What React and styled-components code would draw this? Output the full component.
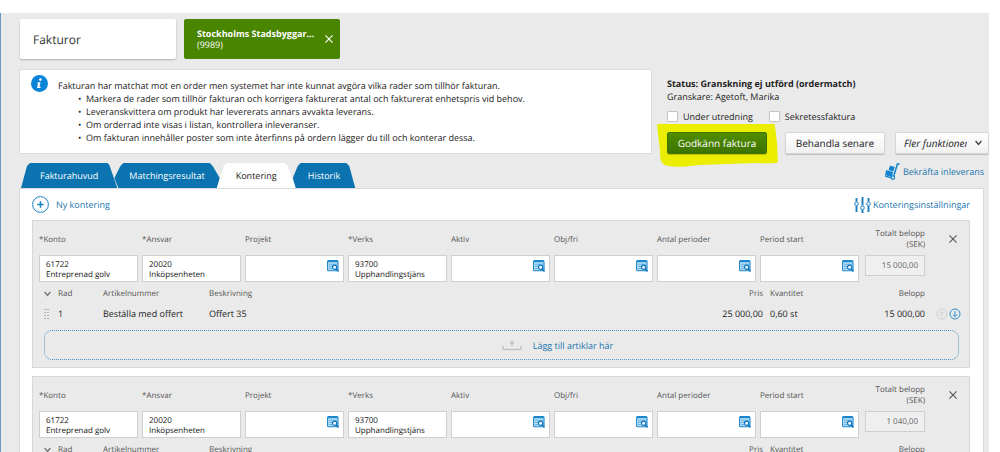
import React, { useState } from "react";
import styled, { createGlobalStyle, css } from "styled-components";

const blue = "#0b74b0";
const link = "#1c77ae";

const GlobalStyle = createGlobalStyle`
  *, *::before, *::after { box-sizing: border-box; }
  html { scrollbar-width: none; }
  body { margin: 0; background: #fff; overflow-x: hidden; }
  body, button, input, select, textarea {
    font-family: "Open Sans", "Noto Sans", sans-serif;
    text-rendering: geometricPrecision;
  }
  body { font-size: 9px; line-height: 13px; color: #222; }
  button { cursor: pointer; }
`;

const Page = styled.div`
  padding: 13px 11px 0 0;
`;

const Shell = styled.main`
  min-height: calc(100vh - 13px);
  padding: 6px 5px 0 18px;
  background: #eaeaea;
  border-left: 1px solid #6f97c2;
`;

const WorkTabs = styled.nav`
  display: flex;
  gap: 8px;
  padding-left: 1px;
`;

const WorkTab = styled.button`
  display: flex;
  align-items: center;
  justify-content: space-between;
  width: 156px;
  height: 40px;
  padding: 0 7px 0 13px;
  border: 0;
  border-radius: 2px;
  text-align: left;
  font-size: 12px;
  color: #333;
  background: #fff;
  box-shadow: 0 1px 2px rgba(0, 0, 0, 0.25);
  ${(p) =>
    p.$active &&
    css`
      font-size: 9px;
      line-height: 11px;
      color: #fff;
      background: #4a8500;
      box-shadow: none;
    `}
  svg { flex: none; }
`;

const WorkTabText = styled.span`
  display: block;
  white-space: nowrap;
  strong { display: block; }
`;

const Header = styled.header`
  display: flex;
  gap: 15px;
  margin: 10px -5px 0 0;
`;

const InfoBox = styled.section`
  display: flex;
  flex: 1;
  gap: 10px;
  padding: 5px 11px 0;
  background: #fff;
  border: 1px solid #dcdcdc;
  border-radius: 2px;
`;

const InfoText = styled.div`
  padding-top: 4px;
  p { margin: 0; }
  ul { margin: 0; padding: 0; list-style: none; }
  li { display: flex; padding-left: 20px; line-height: 13px; }
  li::before { content: "•"; width: 8px; }
`;

const StatusPanel = styled.section`
  width: 322px;
  padding-top: 8px;
`;

const StatusLine = styled.p`
  margin: 0;
  font-weight: ${(p) => (p.$strong ? 700 : 400)};
`;

const CheckRow = styled.div`
  display: flex;
  gap: 16px;
  margin: 7px 0 9px;
`;

const CheckLabel = styled.label`
  display: flex;
  align-items: center;
  gap: 5px;
`;

const Check = styled.input`
  appearance: none;
  width: 11px;
  height: 11px;
  margin: 0;
  background: #fff;
  border: 1px solid #c4c4c4;
  border-radius: 1px;
  &:checked { background: ${blue}; }
`;

const Actions = styled.div`
  display: flex;
  gap: 10px;
`;

const Highlighted = styled.div`
  position: relative;
  padding-right: 8px;
`;

const Marker = styled.svg`
  position: absolute;
  left: -10px;
  top: -9px;
  width: 122px;
  height: 45px;
`;

const buttonBase = css`
  height: 22px;
  border: 1px solid #d6d6d6;
  border-radius: 2px;
  font-size: 10px;
  line-height: 14px;
  color: #222;
  background: linear-gradient(#fff, #f1f1f1);
  box-shadow: 0 1px 1px rgba(0, 0, 0, 0.2);
`;

const Button = styled.button`
  ${buttonBase}
  position: relative;
  width: 100px;
  padding: 0;
  white-space: nowrap;
  ${(p) =>
    p.$primary &&
    css`
      color: #fff;
      border-color: #3f7400;
      background: linear-gradient(#4f8d00, #3d7300);
    `}
`;

const SelectWrap = styled.div`
  position: relative;
  flex: 1;
  min-width: 0;
  svg { position: absolute; right: 7px; top: 8px; pointer-events: none; }
`;

const Select = styled.select`
  ${buttonBase}
  appearance: none;
  width: 100%;
  padding: 0 21px 0 8px;
  font-style: italic;
`;

const TabBar = styled.div`
  display: flex;
  justify-content: space-between;
  align-items: flex-start;
  margin-top: 9px;
  padding-left: 2px;
`;

const Tabs = styled.div`
  display: flex;
`;

const shapes = {
  first: "polygon(0 100%, 6px 3px, 9px 0, calc(100% - 10px) 0, calc(100% - 8px) 2px, 100% 100%)",
  middle:
    "polygon(4px 100%, 0 60%, 6px 3px, 9px 0, calc(100% - 10px) 0, calc(100% - 7px) 3px, 100% 60%, calc(100% - 2px) 100%)",
  open: "polygon(0 100%, 7px 3px, 10px 0, calc(100% - 11px) 0, calc(100% - 8px) 3px, 100% 100%)",
  last: "polygon(3px 100%, 0 60%, 5px 3px, 8px 0, calc(100% - 9px) 0, calc(100% - 6px) 3px, 100% 100%)",
};

const Tab = styled.button`
  height: 25px;
  padding: 0 ${(p) => (p.$shape === "middle" || p.$shape === "last" ? 15 : 19)}px;
  border: 0;
  font-size: 9px;
  color: ${(p) => (p.$shape === "open" ? "#222" : "#fff")};
  background: ${(p) => (p.$shape === "open" ? "#fff" : blue)};
  clip-path: ${(p) => shapes[p.$shape]};
  & + & { margin-left: -3px; }
`;

const IconLink = styled.a`
  display: flex;
  align-items: center;
  gap: ${(p) => p.$gap || 2}px;
  color: ${link};
  text-decoration: none;
`;

const Panel = styled.section`
  padding: 0 13px 8px 12px;
  background: #fff;
  border: 1px solid #d9d9d9;
`;

const Toolbar = styled.div`
  display: flex;
  align-items: center;
  justify-content: space-between;
  height: 31px;
`;

const LinkButton = styled.button`
  display: flex;
  align-items: center;
  gap: 7px;
  padding: 0;
  border: 0;
  background: none;
  font-size: 9px;
  color: ${link};
`;

const Card = styled.article`
  padding: 0 0 7px 6px;
  background: #eaeaea;
  border: 1px solid #d8d8d8;
  & + & { margin-top: 8px; }
`;

const FieldGrid = styled.div`
  display: grid;
  grid-template-columns: repeat(8, minmax(0, 1fr)) 62px 40px;
  column-gap: 4px;
`;

const Field = styled.label`
  display: block;
  font-size: 8px;
  line-height: 11px;
  color: #555;
`;

const FieldName = styled.span`
  display: flex;
  align-items: center;
  height: 34px;
  padding-top: 2px;
  ${(p) => p.$end && css`
    justify-content: flex-end;
    text-align: right;
  `}
`;

const FieldBox = styled.span`
  position: relative;
  display: block;
  svg { position: absolute; right: 5px; top: 5px; }
`;

const FieldText = styled.textarea`
  display: block;
  width: 100%;
  height: 27px;
  padding: 4px 20px 0 6px;
  overflow: hidden;
  resize: none;
  border: 1px solid #cfcfcf;
  border-radius: 0;
  background: #fff;
  font-size: 8px;
  line-height: 10px;
  color: #111;
`;

const TotalField = styled(Field)`
  padding-left: 2px;
`;

const TotalInput = styled.input`
  display: block;
  width: 100%;
  height: 21px;
  padding: 0 6px;
  border: 1px solid #cfcfcf;
  background: #efefef;
  font-size: 8px;
  text-align: right;
  color: #666;
`;

const CloseButton = styled.button`
  justify-self: end;
  align-self: start;
  margin: 14px 12px 0 0;
  padding: 0;
  border: 0;
  background: none;
  svg { display: block; }
`;

const Lines = styled.table`
  width: 100%;
  margin-top: 2px;
  table-layout: fixed;
  border-collapse: collapse;
  tr { height: 20px; }
`;

const Cell = styled.td`
  padding: 0 0 0 ${(p) => p.$pad || 0}px;
  text-align: ${(p) => (p.$end ? "right" : "left")};
  color: #222;
  font-size: 9px;
  font-weight: 400;
  line-height: 12px;
  white-space: nowrap;
  svg { display: inline-block; vertical-align: middle; }
`;

const HeadCell = styled(Cell)`
  font-size: 8px;
  color: #555;
`;

const MiniButton = styled.button`
  padding: 0;
  margin-left: 1px;
  border: 0;
  background: none;
  svg { display: block; }
`;

const MiniGroup = styled.div`
  display: flex;
`;

const DropZone = styled.button`
  display: flex;
  align-items: center;
  justify-content: center;
  gap: 11px;
  width: calc(100% - 15px);
  height: 30px;
  margin: 6px 10px 0 5px;
  padding: 0 0 0 112px;
  border: 1px dotted #4a94c8;
  border-radius: 8px;
  background: none;
  font-size: 9px;
  color: ${link};
`;

const InfoIcon = () => (
  <svg width="17" height="17" viewBox="0 0 17 17" aria-hidden="true">
    <circle cx="8.5" cy="8.5" r="8.5" fill="#0a84d8" />
    <circle cx="9.4" cy="4.6" r="1.3" fill="#fff" />
    <path d="M6.6 7.2h2.9l-1 4.6h1.2l-.3 1.2H6l1-4.6H6.3z" fill="#fff" />
  </svg>
);

const Cross = ({ color = "#555", size = 8 }) => (
  <svg width={size} height={size} viewBox="0 0 8 8" fill="none" stroke={color} strokeWidth="1.1" aria-hidden="true">
    <path d="M.4.4l7.2 7.2M7.6.4L.4 7.6" />
  </svg>
);

const Chevron = ({ color = "#444" }) => (
  <svg width="7" height="6" viewBox="0 0 7 6" fill="none" stroke={color} strokeWidth="1.4" aria-hidden="true">
    <path d="M.6 1l2.9 3.4L6.4 1" />
  </svg>
);

const PlusIcon = () => (
  <svg width="17" height="17" viewBox="0 0 17 17" fill="none" stroke="#1b80c4" aria-hidden="true">
    <circle cx="8.5" cy="8.5" r="7.9" strokeWidth="1" />
    <path d="M8.5 5.3v6.4M5.3 8.5h6.4" strokeWidth="1.5" />
  </svg>
);

const SlidersIcon = () => (
  <svg width="17" height="16" viewBox="0 0 17 16" fill="none" stroke="#1b7dbd" aria-hidden="true">
    <path d="M2.5 1v3.5M2.5 9v6M8.5 0v8.5M8.5 13v3M14.5 1v3.5M14.5 9v6" strokeWidth="1.9" />
    <circle cx="2.5" cy="6.7" r="1.8" />
    <circle cx="8.5" cy="10.8" r="1.8" />
    <circle cx="14.5" cy="6.7" r="1.8" />
  </svg>
);

const CartIcon = () => (
  <svg width="15" height="17" viewBox="0 0 15 17" aria-hidden="true">
    <path d="M14.6 1h-2.2L8.8 13" fill="none" stroke="#1585d0" strokeWidth="1.5" />
    <path d="M5 2.6l4.8 1.3-1.5 4.6L3.600 7z" fill="#1585d0" />
    <path d="M1.200 7l7 1.900-1.500 5L0 12z" fill="#1585d0" />
    <path d="M0 12.900l6.600 2" stroke="#1585d0" strokeWidth="1.400" />
    <circle cx="7.900" cy="14.600" r="1.700" fill="#eaeaea" stroke="#1585d0" strokeWidth="1.200" />
  </svg>
);

const LookupIcon = () => (
  <svg width="12" height="12" viewBox="0 0 12 12" fill="none" aria-hidden="true">
    <rect x=".6" y=".6" width="10.4" height="10.2" rx="1" fill="#bfe3f8" stroke="#1b86cc" strokeWidth="1.1" />
    <path d="M1 1.500h9.600" stroke="#1b86cc" strokeWidth="1.400" />
    <path d="M2 4.200h8M2 6.400h3.500M2 8.600h3" stroke="#4aa5de" strokeWidth=".9" />
    <circle cx="7.600" cy="7.300" r="2.100" fill="#fff" stroke="#0f76bd" strokeWidth="1.200" />
    <path d="M9.200 8.900l2.300 2.500" stroke="#0f76bd" strokeWidth="1.500" />
  </svg>
);

const ArrowCircle = ({ up, color }) => (
  <svg width="12" height="12" viewBox="0 0 12 12" fill="none" stroke={color} aria-hidden="true">
    <circle cx="6" cy="6" r="5" />
    <path d={up ? "M6 8.800V3.400M3.900 5.500L6 3.400l2.100 2.100" : "M6 3.200v5.400M3.900 6.500L6 8.600l2.100-2.100"} />
  </svg>
);

const GripIcon = () => (
  <svg width="6" height="11" viewBox="0 0 6 11" fill="#b0b0b0" aria-hidden="true">
    {[0, 3, 6, 9].map((y) => (
      <React.Fragment key={y}>
        <rect x="0" y={y} width="2" height="1" />
        <rect x="3" y={y} width="2" height="1" />
      </React.Fragment>
    ))}
  </svg>
);

const TrayIcon = () => (
  <svg width="20" height="12" viewBox="0 0 20 12" fill="none" stroke="#c2c2c2" aria-hidden="true">
    <path d="M1 7v3.500h18V7" strokeWidth="1.300" />
    <path d="M10 7V2.500" strokeWidth="1.600" />
    <path d="M7.200 4.600L10 1.200l2.800 3.400z" fill="#c2c2c2" stroke="none" />
  </svg>
);

const fieldNames = ["*Konto", "*Ansvar", "Projekt", "*Verks", "Aktiv", "Obj/fri", "Antal perioder", "Period start"];
const fieldValues = {
  "*Konto": "61722\nEntreprenad golv",
  "*Ansvar": "20020\nInköpsenheten",
  "*Verks": "93700\nUpphandlingstjänster",
};

const entries = [
  {
    id: "a",
    total: "15 000,00",
    lines: [{ row: 1, article: "Beställa med offert", text: "Offert 35", price: "25 000,00", qty: "0,60 st", sum: "15 000,00" }],
  },
  { id: "b", total: "1 040,00", lines: [] },
];

function Entry({ entry }) {
  return (
    <Card>
      <FieldGrid>
        {fieldNames.map((name) => (
          <Field key={name}>
            <FieldName>{name}</FieldName>
            <FieldBox>
              <FieldText defaultValue={fieldValues[name] || ""} spellCheck={false} />
              {!fieldValues[name] && <LookupIcon />}
            </FieldBox>
          </Field>
        ))}
        <TotalField>
          <FieldName $end>
            Totalt belopp
            <br />
            (SEK)
          </FieldName>
          <TotalInput defaultValue={entry.total} readOnly />
        </TotalField>
        <CloseButton aria-label="Ta bort">
          <Cross />
        </CloseButton>
      </FieldGrid>
      <Lines>
        <colgroup>
          <col width="19" />
          <col width="45" />
          <col width="106" />
          <col />
          <col width="100" />
          <col width="87" />
          <col width="75" />
          <col width="44" />
        </colgroup>
        <thead>
          <tr>
            <HeadCell as="th" $pad={5}><Chevron color="#777" /></HeadCell>
            <HeadCell as="th">Rad</HeadCell>
            <HeadCell as="th">Artikelnummer</HeadCell>
            <HeadCell as="th">Beskrivning</HeadCell>
            <HeadCell as="th" $end>Pris</HeadCell>
            <HeadCell as="th" $pad={7}>Kvantitet</HeadCell>
            <HeadCell as="th" $end>Belopp</HeadCell>
            <HeadCell />
          </tr>
        </thead>
        <tbody>
          {entry.lines.map((l) => (
            <tr key={l.row}>
              <Cell $pad={5}><GripIcon /></Cell>
              <Cell>{l.row}</Cell>
              <Cell>{l.article}</Cell>
              <Cell>{l.text}</Cell>
              <Cell $end>{l.price}</Cell>
              <Cell $pad={7}>{l.qty}</Cell>
              <Cell $end>{l.sum}</Cell>
              <Cell $pad={10}>
                <MiniGroup>
                  <MiniButton aria-label="Flytta upp" disabled><ArrowCircle up color="#cfcfcf" /></MiniButton>
                  <MiniButton aria-label="Flytta ner"><ArrowCircle color="#2d8fd0" /></MiniButton>
                </MiniGroup>
              </Cell>
            </tr>
          ))}
        </tbody>
      </Lines>
      {entry.lines.length > 0 && (
        <DropZone>
          <TrayIcon />
          Lägg till artiklar här
        </DropZone>
      )}
    </Card>
  );
}

export default function App() {
  const [review, setReview] = useState(false);
  const [secret, setSecret] = useState(false);
  return (
    <Page>
      <GlobalStyle />
      <Shell>
        <WorkTabs>
          <WorkTab>Fakturor</WorkTab>
          <WorkTab $active>
            <WorkTabText>
              <strong>Stockholms Stadsbyggar...</strong>
              (9989)
            </WorkTabText>
            <Cross color="#fff" />
          </WorkTab>
        </WorkTabs>
        <Header>
          <InfoBox>
            <InfoIcon />
            <InfoText>
              <p>Fakturan har matchat mot en order men systemet har inte kunnat avgöra vilka rader som tillhör fakturan.</p>
              <ul>
                <li>Markera de rader som tillhör fakturan och korrigera fakturerat antal och fakturerat enhetspris vid behov.</li>
                <li>Leveranskvittera om produkt har levererats annars avvakta leverans.</li>
                <li>Om orderrad inte visas i listan, kontrollera inleveranser.</li>
                <li>Om fakturan innehåller poster som inte återfinns på ordern lägger du till och konterar dessa.</li>
              </ul>
            </InfoText>
          </InfoBox>
          <StatusPanel>
            <StatusLine $strong>Status: Granskning ej utförd (ordermatch)</StatusLine>
            <StatusLine>Granskare: Agetoft, Marika</StatusLine>
            <CheckRow>
              <CheckLabel>
                <Check type="checkbox" checked={review} onChange={() => setReview(!review)} />
                Under utredning
              </CheckLabel>
              <CheckLabel>
                <Check type="checkbox" checked={secret} onChange={() => setSecret(!secret)} />
                Sekretessfaktura
              </CheckLabel>
            </CheckRow>
            <Actions>
              <Highlighted>
                <Marker viewBox="0 0 122 45" aria-hidden="true">
                  <path
                    d="M0 2Q1 0 12 1L112 1Q118 0 118 3L120 20 121 39Q119 41 98 40L42 42Q14 46 6 41 3 39 3 28Z"
                    fill="#ebee00"
                  />
                </Marker>
                <Button $primary>Godkänn faktura</Button>
              </Highlighted>
              <Button>Behandla senare</Button>
              <SelectWrap>
                <Select aria-label="Fler funktioner">
                  <option>Fler funktioner</option>
                </Select>
                <Chevron />
              </SelectWrap>
            </Actions>
          </StatusPanel>
        </Header>
        <TabBar>
          <Tabs role="tablist">
            <Tab role="tab" $shape="first">Fakturahuvud</Tab>
            <Tab role="tab" $shape="middle">Matchingsresultat</Tab>
            <Tab role="tab" aria-selected="true" $shape="open">Kontering</Tab>
            <Tab role="tab" $shape="last">Historik</Tab>
          </Tabs>
          <IconLink href="#inleverans" $gap={3}>
            <CartIcon />
            Bekräfta inleverans
          </IconLink>
        </TabBar>
        <Panel>
          <Toolbar>
            <LinkButton>
              <PlusIcon />
              Ny kontering
            </LinkButton>
            <IconLink href="#installningar">
              <SlidersIcon />
              Konteringsinställningar
            </IconLink>
          </Toolbar>
          {entries.map((entry) => (
            <Entry key={entry.id} entry={entry} />
          ))}
        </Panel>
      </Shell>
    </Page>
  );
}
